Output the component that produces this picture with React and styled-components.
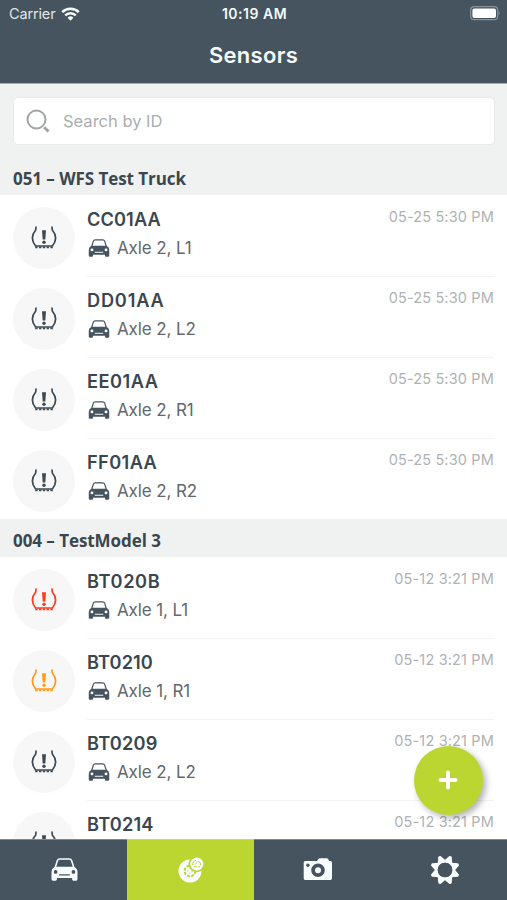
import React from "react";
import styled, { createGlobalStyle } from "styled-components";

const GlobalStyle = createGlobalStyle`
  * {
    box-sizing: border-box;
  }
  body {
    margin: 0;
    overflow: hidden;
    background: #ffffff;
  }
  h1, h2, h3, p {
    margin: 0;
  }
`;

const Tela = styled.div`
  display: flex;
  flex-direction: column;
  width: 507px;
  height: 900px;
  overflow: hidden;
  background: #ffffff;
  color: #3b464e;
  font-family: Inter, "Liberation Sans", sans-serif;
`;

const Header = styled.header`
  flex: none;
  height: 84px;
  background: #45545e;
  border-bottom: 1px solid #a3adb2;
  color: #f4fafc;
`;

const StatusBar = styled.div`
  display: grid;
  grid-template-columns: 1fr auto 1fr;
  align-items: center;
  height: 27px;
  padding: 0 7px 0 9px;
  font-size: 14.5px;
  line-height: 27px;
`;

const Carrier = styled.div`
  display: flex;
  align-items: center;
  gap: 6px;
  color: #e0e6e9;
  letter-spacing: -0.15px;
`;

const Clock = styled.span`
  font-weight: 600;
  font-size: 14px;
  letter-spacing: 0.5px;
`;

const Battery = styled.svg`
  justify-self: end;
`;

const Title = styled.h1`
  font-size: 22px;
  font-weight: 600;
  line-height: 56px;
  text-align: center;
  letter-spacing: 0.3px;
`;

const SearchArea = styled.div`
  flex: none;
  height: 77px;
  padding: 13px 12px 0 13px;
  background: #f0f2f2;
`;

const SearchBox = styled.label`
  display: flex;
  align-items: center;
  gap: 13px;
  height: 48px;
  padding-left: 12px;
  background: #ffffff;
  border: 1px solid #e9ebeb;
  border-radius: 5px;
`;

const SearchInput = styled.input`
  flex: 1;
  padding: 0;
  border: none;
  outline: none;
  font: 400 16.5px Inter, sans-serif;
  &::placeholder {
    color: #abadae;
    opacity: 1;
  }
`;

const List = styled.main`
  flex: 1;
  min-height: 0;
  overflow: hidden;
`;

const GroupTitle = styled.h2`
  height: ${(props) => (props.$first ? "34px" : "38px")};
  padding: ${(props) => (props.$first ? "1px" : "5px")} 0 0 13px;
  background: #f0f2f2;
  font-family: "Open Sans", sans-serif;
  font-size: 17px;
  font-weight: 700;
  line-height: 33px;
  letter-spacing: -0.06px;
`;

const Row = styled.div`
  display: flex;
  height: 81px;
  padding: 0 13px;
`;

const SensorCircle = styled.div`
  flex: none;
  display: flex;
  align-items: center;
  justify-content: center;
  width: 62px;
  height: 62px;
  margin: 12px 12px 0 0;
  border-radius: 50%;
  background: #f7f7f7;
  color: ${(props) => props.color};
`;

const RowBody = styled.div`
  flex: 1;
  display: flex;
  justify-content: space-between;
  margin-bottom: -1px;
  border-bottom: 1px solid ${(props) => (props.$last ? "transparent" : "#f2f3f3")};
`;

const SensorId = styled.h3`
  margin-top: 11px;
  font-size: 18.2px;
  font-weight: 600;
  line-height: 27px;
  letter-spacing: ${(props) => props.$spacing}px;
`;

const Position = styled.div`
  display: flex;
  align-items: center;
  gap: 7px;
  height: 30px;
  padding-left: 1px;
  color: #63686c;
  font-size: 17px;
  letter-spacing: -0.12px;
  white-space: nowrap;
  svg {
    color: #45545e;
  }
`;

const DateText = styled.p`
  margin-top: 12px;
  color: #afb2b4;
  font-size: 14.5px;
  line-height: 20px;
  letter-spacing: 0.15px;
`;

const AddButton = styled.button`
  position: absolute;
  left: 414px;
  top: 746px;
  display: flex;
  align-items: center;
  justify-content: center;
  width: 69px;
  height: 69px;
  padding: 0 1px 1px 0;
  border: none;
  border-radius: 50%;
  background: #bcd631;
  box-shadow: 3px 3px 6px rgba(60, 60, 80, 0.4);
`;

const TabBar = styled.nav`
  flex: none;
  display: grid;
  grid-template-columns: 127px 127px 127px 126px;
  height: 61px;
`;

const Tab = styled.button`
  display: flex;
  align-items: center;
  justify-content: center;
  padding: 0 0 1px 1px;
  border: none;
  border-top: 1px solid ${(props) => (props.$active ? "#c9dd63" : "#7d888f")};
  background: ${(props) => (props.$active ? "#bcd631" : "#45545e")};
  color: #f8fdff;
`;

function CarIcon({ width, height, hole }) {
  return (
    <svg width={width} height={height} viewBox="0 0 26 22">
      <path
        fill="currentColor"
        fillRule="evenodd"
        d="M3.4 8.6 5.4 2.4Q6.1.2 8.4.2h9.200q2.300 0 3 2.200l2 6.200q2.900 1.600 2.900 4.400v7.400q0 1.400-1.400 1.400h-2.400q-1.400 0-1.400-1.400v-1.200H5.700v1.200q0 1.400-1.400 1.400H1.900Q.5 21.800.5 20.400V13q0-2.800 2.900-4.400ZM5.100 8.300h15.800l-1.700-5.600q-.3-1-1.400-1H8.200q-1.100 0-1.400 1Z"
      />
      <circle cx="4.400" cy="13.300" r="1.800" fill={hole} />
      <circle cx="21.600" cy="13.300" r="1.800" fill={hole} />
      <path d="M8.300 16.200h9.400" stroke={hole} strokeWidth="1.200" strokeLinecap="round" />
    </svg>
  );
}

function PressureIcon() {
  return (
    <svg width="26" height="24" viewBox="0 0 26 24" fill="none" stroke="currentColor">
      <path
        d="M5 1.200 4.700 4C.5 9 .1 14.300 4.600 20h16.800C25.900 14.300 25.500 9 21.300 4L21 1.200"
        strokeWidth="1.700"
        strokeLinejoin="round"
        strokeLinecap="round"
      />
      <path d="M4.200 21.300h17.600" strokeWidth="1.800" strokeDasharray="2.400 1.400" />
      <path d="M11 4.300h4l-.7 9.200h-2.600Z" fill="currentColor" stroke="none" />
      <circle cx="13" cy="16.300" r="1.700" fill="currentColor" stroke="none" />
    </svg>
  );
}

function WifiIcon() {
  return (
    <svg width="19" height="14" viewBox="0 0 19 14" fill="none" stroke="#f8fcfe" strokeWidth="2.500">
      <path d="M1.200 5.200a11.800 11.800 0 0 1 16.600 0" />
      <path d="M4.200 8.400a7.500 7.500 0 0 1 10.600 0" />
      <path d="M6.600 10.700a4.100 4.100 0 0 1 5.800 0L9.500 13.700Z" fill="#f8fcfe" stroke="none" />
    </svg>
  );
}

function WheelIcon() {
  return (
    <svg width="26" height="26" viewBox="0 0 26 26">
      <circle cx="12" cy="14" r="11.500" fill="currentColor" />
      <circle cx="12" cy="14" r="5.300" fill="none" stroke="#bcd631" strokeWidth="2" strokeDasharray="2.800 1.360" />
      <circle cx="12" cy="14" r="2.200" fill="none" stroke="#bcd631" strokeWidth="1" strokeDasharray="1.400 1.360" />
      <circle cx="18.800" cy="7" r="8.300" fill="#bcd631" />
      <circle cx="18.800" cy="7" r="6.500" fill="currentColor" />
      <path
        d="M14.800 8A4.200 4.200 0 0 1 18 3.400M19.500 3.900A4.700 4.700 0 0 1 22.900 8.500M15.800 9.800h3M17.300 7.500l1.600-2M20.300 9.800h1.800"
        fill="none"
        stroke="#bcd631"
        strokeWidth="1"
      />
    </svg>
  );
}

function CameraIcon() {
  return (
    <svg width="30" height="23" viewBox="0 0 30 23">
      <path
        fill="currentColor"
        d="M2.300 3H14l1.500-2q.5-.7 1.400-.7h6.700q1 0 1.500.7l1 2h1.300q1.600 0 1.600 1.600v15.700q0 1.600-1.600 1.600H2.300Q.7 21.900.7 20.300V4.600Q.7 3 2.300 3Z"
      />
      <circle cx="15" cy="12.300" r="4.900" fill="none" stroke="#45545e" strokeWidth="3.800" />
      <circle cx="4.900" cy="7.200" r="1.700" fill="#45545e" />
    </svg>
  );
}

function GearIcon() {
  return (
    <svg width="30" height="30" viewBox="-15 -15 30 30">
      {[22.5, 67.5, 112.5, 157.5, 202.5, 247.5, 292.5, 337.5].map((angle) => (
        <path
          key={angle}
          d="M-4.200-8.800-1.400-14.300q.3-.5.800-.5H.6q.5 0 .8.500L4.200-8.800Z"
          fill="currentColor"
          transform={`rotate(${angle})`}
        />
      ))}
      <circle r="8.700" fill="none" stroke="currentColor" strokeWidth="2.800" />
      <circle r="7.300" fill="#45545e" />
    </svg>
  );
}

const DARK = "#3d4953";

const groups = [
  {
    name: "051 – WFS Test Truck",
    date: "05-25 5:30 PM",
    sensors: [
      { id: "CC01AA", position: "Axle 2, L1", color: DARK, spacing: 0.1 },
      { id: "DD01AA", position: "Axle 2, L2", color: DARK, spacing: 0.8 },
      { id: "EE01AA", position: "Axle 2, R1", color: DARK, spacing: 0.5 },
      { id: "FF01AA", position: "Axle 2, R2", color: DARK, spacing: 0.4 },
    ],
  },
  {
    name: "004 – TestModel 3",
    date: "05-12 3:21 PM",
    sensors: [
      { id: "BT020B", position: "Axle 1, L1", color: "#ff3b1f", spacing: 0.6 },
      { id: "BT0210", position: "Axle 1, R1", color: "#ff9a1a", spacing: 0.1 },
      { id: "BT0209", position: "Axle 2, L2", color: DARK, spacing: 0.2 },
      { id: "BT0214", color: DARK, spacing: 0.2 },
    ],
  },
];

function SensorRow({ sensor, date, last }) {
  return (
    <Row>
      <SensorCircle color={sensor.color}>
        <PressureIcon />
      </SensorCircle>
      <RowBody $last={last}>
        <div>
          <SensorId $spacing={sensor.spacing}>{sensor.id}</SensorId>
          {sensor.position && (
            <Position>
              <CarIcon width={22} height={18} hole="#ffffff" />
              {sensor.position}
            </Position>
          )}
        </div>
        <DateText>{date}</DateText>
      </RowBody>
    </Row>
  );
}

export default function App() {
  return (
    <Tela>
      <GlobalStyle />
      <Header>
        <StatusBar>
          <Carrier>
            Carrier
            <WifiIcon />
          </Carrier>
          <Clock>10:19 AM</Clock>
          <Battery width="30" height="15" viewBox="0 0 30 15">
            <rect x=".7" y=".7" width="27" height="13" rx="3.500" fill="none" stroke="#87929a" strokeWidth="1.200" />
            <rect x="2.400" y="2.400" width="23.600" height="9.600" rx="2" fill="#ffffff" />
            <path d="M28.600 5q2 2.200 0 4.400Z" fill="#87929a" />
          </Battery>
        </StatusBar>
        <Title>Sensors</Title>
      </Header>
      <SearchArea>
        <SearchBox>
          <svg width="24" height="24" viewBox="0 0 24 24" fill="none" stroke="#a2a5a6">
            <circle cx="10.500" cy="10.500" r="9" strokeWidth="2" />
            <path d="m18.200 18.300 4.300 4.200" strokeWidth="3" />
          </svg>
          <SearchInput placeholder="Search by ID" />
        </SearchBox>
      </SearchArea>
      <List>
        {groups.map((group, index) => (
          <section key={group.name}>
            <GroupTitle $first={index === 0}>{group.name}</GroupTitle>
            {group.sensors.map((sensor, i) => (
              <SensorRow
                key={sensor.id}
                sensor={sensor}
                date={group.date}
                last={i === group.sensors.length - 1}
              />
            ))}
          </section>
        ))}
      </List>
      <TabBar>
        <Tab>
          <CarIcon width={27} height={23} hole="#45545e" />
        </Tab>
        <Tab $active>
          <WheelIcon />
        </Tab>
        <Tab>
          <CameraIcon />
        </Tab>
        <Tab>
          <GearIcon />
        </Tab>
      </TabBar>
      <AddButton>
        <svg width="20" height="20" viewBox="0 0 20 20" stroke="#ffffff" strokeWidth="4" strokeLinecap="round">
          <path d="M10 2.500v15M2.500 10h15" />
        </svg>
      </AddButton>
    </Tela>
  );
}
